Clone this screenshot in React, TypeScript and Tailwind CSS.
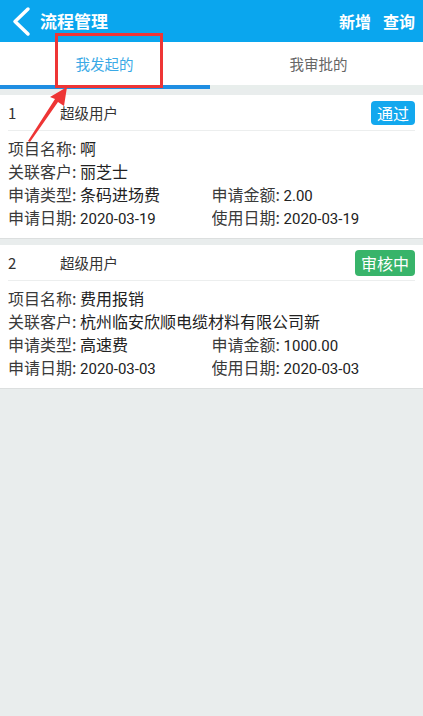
import React from "react";

const font = { fontFamily: '"Noto Sans CJK SC", "Noto Sans", sans-serif' };
const num = { fontFamily: 'Roboto, "Noto Sans CJK SC", sans-serif' };

type Item = {
  no: string;
  user: string;
  status: string;
  statusCls: string;
  name: string;
  customer: string;
  type: string;
  amount: string;
  applyDate: string;
  useDate: string;
};

const items: Item[] = [
  {
    no: "1",
    user: "超级用户",
    status: "通过",
    statusCls: "bg-[#13a8ee] px-[6px]",
    name: "啊",
    customer: "丽芝士",
    type: "条码进场费",
    amount: "2.00",
    applyDate: "2020-03-19",
    useDate: "2020-03-19",
  },
  {
    no: "2",
    user: "超级用户",
    status: "审核中",
    statusCls: "bg-[#38b46a] px-[6px] h-[26px]",
    name: "费用报销",
    customer: "杭州临安欣顺电缆材料有限公司新",
    type: "高速费",
    amount: "1000.00",
    applyDate: "2020-03-03",
    useDate: "2020-03-03",
  },
];

function Label({ children }: { children: React.ReactNode }) {
  return <span className="text-[#3a3a3a]">{children}</span>;
}

function Num({ children }: { children: React.ReactNode }) {
  return (
    <span className="text-[15px] leading-[23px]" style={num}>
      {children}
    </span>
  );
}

function Line({ children }: { children: React.ReactNode }) {
  return <div className="h-[23px] leading-[23px] whitespace-nowrap overflow-hidden">{children}</div>;
}

function Card({ it }: { it: Item }) {
  return (
    <div className="bg-white border-b border-[#dcdfdf]">
      <div className="mx-2 mt-[6px] h-[36px] flex items-center border-b border-[#eceeee]">
        <span className="w-[52px] text-[15px] text-[#333] pt-[2px]">{it.no}</span>
        <span className="flex-1 text-[14.5px] text-[#333]">{it.user}</span>
        <span
          className={`h-[24px] flex items-center rounded-[4px] text-white text-[16px] ${it.statusCls}`}
        >
          {it.status}
        </span>
      </div>
      <div className="px-2 pt-[6px] pb-[9px] text-[16px] leading-[23px] text-[#222]">
        <Line>
          <Label>项目名称:</Label> {it.name}
        </Line>
        <Line>
          <Label>关联客户:</Label> {it.customer}
        </Line>
        <div className="grid grid-cols-2">
          <Line>
            <Label>申请类型:</Label> {it.type}
          </Line>
          <Line>
            <Label>申请金额:</Label> <Num>{it.amount}</Num>
          </Line>
        </div>
        <div className="grid grid-cols-2">
          <Line>
            <Label>申请日期:</Label> <Num>{it.applyDate}</Num>
          </Line>
          <Line>
            <Label>使用日期:</Label> <Num>{it.useDate}</Num>
          </Line>
        </div>
      </div>
    </div>
  );
}

export default function App() {
  return (
    <div className="relative w-[423px] h-[716px] bg-[#e9eded] overflow-hidden" style={font}>
      <div className="h-[42px] bg-[#0aa6ee] flex items-center text-white">
        <svg width="40" height="42" viewBox="0 0 40 42" className="shrink-0">
          <path d="M28 9 L15 21.5 L28 34" fill="none" stroke="white" strokeWidth="3.5" strokeLinecap="round" strokeLinejoin="round" />
        </svg>
        <span className="text-[17px] font-bold flex-1">流程管理</span>
        <span className="text-[16px] font-bold mr-[12px]">新增</span>
        <span className="text-[16px] font-bold mr-[8px]">查询</span>
      </div>
      <div className="bg-white">
        <div className="h-[43px] flex">
          <div className="flex-1 flex items-center justify-center text-[14.5px] text-[#3aa9e6] pr-[5px]">我发起的</div>
          <div className="flex-1 flex items-center justify-center text-[14.5px] text-[#666]">我审批的</div>
        </div>
        <div className="flex h-[4px]">
          <div className="w-[210px] bg-[#1f8ee2]" />
          <div className="flex-1 bg-[#e8eeec]" />
        </div>
      </div>
      {items.map((it) => (
        <Card key={it.no} it={it} />
      ))}
      <div className="absolute left-[55px] top-[33px] w-[108px] h-[55px] border-[3px] border-[#ee3535]" />
      <svg className="absolute left-0 top-0" width="423" height="716" viewBox="0 0 423 716" style={{ pointerEvents: "none" }}>
        <polygon points="28,141 55,99 50,97 67,87 64,106 58,102 30,142" fill="#ee3535" />
      </svg>
    </div>
  );
}
